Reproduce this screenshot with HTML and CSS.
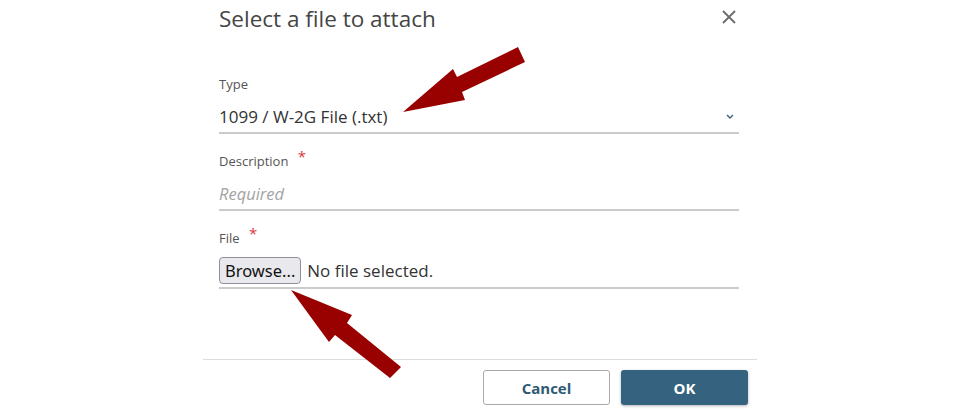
FILE: index.html
```html
<!DOCTYPE html>
<html lang="en">
<head>
  <meta charset="UTF-8" />
  <meta name="viewport" content="width=device-width, initial-scale=1" />
  <title>Select a file to attach</title>
  <link rel="stylesheet" href="styles.css">
</head>
<body>

  <div class="dialog">
    <div class="dialog-header">
      <h2>Select a file to attach</h2>
      <button class="close-btn" aria-label="Close">
        <svg width="14" height="14" viewBox="0 0 14 14">
          <path d="M1 1 L13 13 M13 1 L1 13" stroke="#6b6b6b" stroke-width="1.8" fill="none" />
        </svg>
      </button>
    </div>

    <div class="dialog-body">
      <div class="field">
        <label>Type</label>
        <div class="control select">
          <span class="value">1099 / W-2G File (.txt)</span>
          <svg class="chevron" width="8" height="5" viewBox="0 0 8 5">
            <path d="M1 1 L4 4 L7 1" stroke="#3d6079" stroke-width="1.4" fill="none" />
          </svg>
        </div>
      </div>

      <div class="field">
        <label>Description <span class="req">*</span></label>
        <div class="control">
          <span class="placeholder">Required</span>
        </div>
      </div>

      <div class="field">
        <label>File <span class="req">*</span></label>
        <div class="control file">
          <span class="browse">Browse...</span>
          <span class="value">No file selected.</span>
        </div>
      </div>
    </div>

    <div class="dialog-footer">
      <button class="btn btn-cancel">Cancel</button>
      <button class="btn btn-ok">OK</button>
    </div>
  </div>

  <!-- pointer arrows drawn on top of the dialog -->
  <svg class="arrows" width="960" height="415" viewBox="0 0 960 415">
    <polygon fill="#990000" points="403,112 453,69 457,77 518,47 525,62 462,92 465,100" />
    <polygon fill="#990000" points="291,290 352,315 347,323 401,367 390,378 335,335 329,342" />
  </svg>

</body>
</html>
```

FILE: styles.css
```css
body {
  font-family: "Open Sans", "Noto Sans", sans-serif;
  background-color: #fff;
  color: #333;
  margin: 0;
  position: relative;
  width: 960px;
  height: 415px;
  overflow: hidden;
}

.dialog {
  width: 554px;
  margin-left: 203px;
}

.dialog-header {
  display: flex;
  justify-content: space-between;
  align-items: flex-start;
  height: 38px;
  padding: 0 18px 0 16px;
}

.dialog-header h2 {
  margin: 0;
  font-size: 22.5px;
  font-weight: normal;
  color: #454545;
  line-height: 38px;
}

.close-btn {
  background: none;
  border: none;
  padding: 0;
  width: 20px;
  height: 20px;
  margin-top: 7px;
  display: flex;
  align-items: center;
  justify-content: center;
}

.dialog-body {
  padding: 37px 18px 70px 16px;
}

.field + .field {
  margin-top: 17px;
}

.field label {
  display: block;
  font-size: 13px;
  line-height: 18px;
  color: #555;
}

.req {
  color: #d9393b;
  font-size: 15px;
  margin-left: 6px;
  position: relative;
  top: -4px;
}

.control {
  display: flex;
  align-items: center;
  height: 32px;
  margin-top: 7px;
  border-bottom: 2px solid #cbcbcb;
  font-size: 17px;
}

.control .value {
  color: #333;
}

.select {
  justify-content: space-between;
}

.chevron {
  margin-right: 5px;
}

.placeholder {
  color: #a3a3a3;
  font-style: italic;
  font-size: 16.5px;
}

.file {
  height: 33px;
}

.browse {
  font-family: "Noto Sans", sans-serif;
  font-size: 16.5px;
  color: #111;
  background: #e9e9ed;
  border: 1px solid #8f8f9d;
  border-radius: 4px;
  height: 25px;
  line-height: 25px;
  padding: 0 5px;
  margin-right: 6px;
}

.dialog-footer {
  display: flex;
  justify-content: flex-end;
  gap: 11px;
  border-top: 1px solid #dcdcdc;
  padding: 10px 9px 0 0;
}

.btn {
  width: 127px;
  height: 35px;
  border-radius: 3px;
  font-family: "Open Sans", sans-serif;
  font-size: 15px;
  font-weight: bold;
  cursor: pointer;
}

.btn-cancel {
  background: #fff;
  color: #2f5a74;
  border: 1px solid #a9a9a9;
}

.btn-ok {
  background: #35637f;
  color: #fff;
  border: none;
  box-shadow: 0 1px 3px rgba(0, 0, 0, 0.3);
}

.arrows {
  position: absolute;
  left: 0;
  top: 0;
  pointer-events: none;
}
```
